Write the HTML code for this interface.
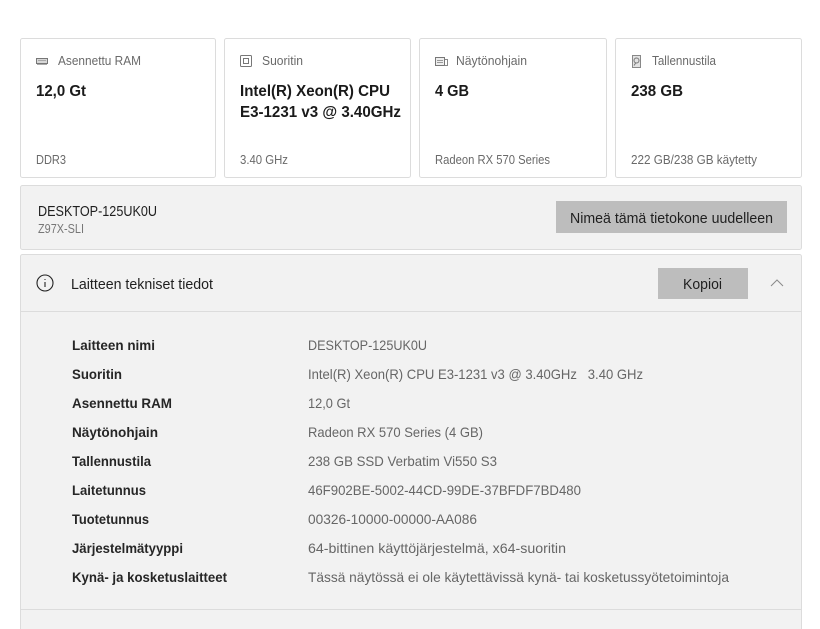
<!DOCTYPE html>
<html lang="fi">
<head>
<meta charset="utf-8">
<title>Tietoja</title>
<style>
html,body{margin:0;padding:0;background:#fff;width:820px;height:629px;overflow:hidden}
svg{display:block}
text{font-family:"Liberation Sans",sans-serif;font-size:14px;fill:#5f5f5f}
.cap{font-size:12.5px;fill:#6a6a6a}
.big{font-size:16px;font-weight:bold;fill:#1a1a1a}
.sub{font-size:12.5px;fill:#6a6a6a}
.dark{font-size:14.5px;fill:#1f1f1f}
.lb{font-size:14px;font-weight:bold;fill:#262626}
.val{font-size:14px;fill:#666}
</style>
</head>
<body>
<svg width="820" height="629" viewBox="0 0 820 629" xmlns="http://www.w3.org/2000/svg">
<rect width="820" height="629" fill="#fff"/>

<!-- cards -->
<g fill="#fff" stroke="#dcdcdc">
<rect x="20.5" y="38.5" width="195" height="139" rx="2"/>
<rect x="224.5" y="38.5" width="186" height="139" rx="2"/>
<rect x="419.5" y="38.5" width="187" height="139" rx="2"/>
<rect x="615.5" y="38.5" width="186" height="139" rx="2"/>
</g>

<!-- card icons -->
<g fill="none" stroke="#777" stroke-width="1">
<rect x="36.5" y="58.5" width="11" height="5" fill="#d8d8d8"/>
<path d="M38.5 60.5h7" stroke="#777" stroke-dasharray="1 1"/>
<path d="M37 64.5h10" stroke="#aaa"/>
<rect x="240.5" y="55.5" width="11" height="11" rx="1"/>
<rect x="243.5" y="58.5" width="5" height="5"/>
<rect x="435.5" y="57.5" width="9" height="8" fill="#eee"/>
<path d="M437 60.5h6M437 62.5h6" stroke="#999"/>
<path d="M444.5 59.5h3v6h-3" stroke="#888"/>
<rect x="632.5" y="55.5" width="8" height="12" fill="#e2e2e2" stroke="#888"/>
<circle cx="636.5" cy="60.5" r="2.5"/>
<path d="M634 65.5l2-3" stroke="#777"/>
</g>

<!-- card text -->
<text class="cap" x="58" y="65" textLength="83" lengthAdjust="spacingAndGlyphs">Asennettu RAM</text>
<text class="big" x="36" y="96" textLength="50" lengthAdjust="spacingAndGlyphs">12,0 Gt</text>
<text class="sub" x="36" y="164" textLength="30" lengthAdjust="spacingAndGlyphs">DDR3</text>

<text class="cap" x="262" y="65" textLength="41" lengthAdjust="spacingAndGlyphs">Suoritin</text>
<text class="big" x="240" y="96" textLength="150" lengthAdjust="spacingAndGlyphs">Intel(R) Xeon(R) CPU</text>
<text class="big" x="240" y="117" textLength="161" lengthAdjust="spacingAndGlyphs">E3-1231 v3 @ 3.40GHz</text>
<text class="sub" x="240" y="164" textLength="48" lengthAdjust="spacingAndGlyphs">3.40 GHz</text>

<text class="cap" x="456" y="65" textLength="71" lengthAdjust="spacingAndGlyphs">Näytönohjain</text>
<text class="big" x="435" y="96" textLength="34" lengthAdjust="spacingAndGlyphs">4 GB</text>
<text class="sub" x="435" y="164" textLength="115" lengthAdjust="spacingAndGlyphs">Radeon RX 570 Series</text>

<text class="cap" x="652" y="65" textLength="64" lengthAdjust="spacingAndGlyphs">Tallennustila</text>
<text class="big" x="631" y="96" textLength="52" lengthAdjust="spacingAndGlyphs">238 GB</text>
<text class="sub" x="631" y="164" textLength="126" lengthAdjust="spacingAndGlyphs">222 GB/238 GB käytetty</text>

<!-- device name panel -->
<rect x="20.5" y="185.5" width="781" height="64" rx="2" fill="#f2f2f2" stroke="#dcdcdc"/>
<text class="dark" x="38" y="216" textLength="119" lengthAdjust="spacingAndGlyphs">DESKTOP-125UK0U</text>
<text class="sub" x="38" y="233" textLength="46" lengthAdjust="spacingAndGlyphs" style="fill:#777">Z97X-SLI</text>
<rect x="556" y="201" width="231" height="32" fill="#bdbdbd"/>
<text class="dark" x="570" y="223" textLength="203" lengthAdjust="spacingAndGlyphs">Nimeä tämä tietokone uudelleen</text>

<!-- specs panel -->
<rect x="20.5" y="254.5" width="781" height="380" rx="2" fill="#f2f2f2" stroke="#dcdcdc"/>
<path d="M21 311.5h780M21 609.5h780" stroke="#dcdcdc" fill="none"/>

<circle cx="45" cy="283" r="8" fill="none" stroke="#222" stroke-width="1.1"/>
<path d="M45 282v5" stroke="#222" stroke-width="1.1" fill="none"/>
<rect x="44.5" y="279" width="1" height="1" fill="#222"/>

<text class="dark" x="71" y="289" textLength="142" lengthAdjust="spacingAndGlyphs">Laitteen tekniset tiedot</text>
<rect x="658" y="268" width="90" height="31" fill="#bdbdbd"/>
<text class="dark" x="683" y="289" textLength="39" lengthAdjust="spacingAndGlyphs">Kopioi</text>
<path d="M771 286l6-6 6 6" fill="none" stroke="#8a8a8a" stroke-width="1"/>

<!-- rows -->
<text class="lb" x="72" y="350" textLength="83" lengthAdjust="spacingAndGlyphs">Laitteen nimi</text>
<text class="val" x="308" y="350" textLength="119" lengthAdjust="spacingAndGlyphs">DESKTOP-125UK0U</text>
<text class="lb" x="72" y="379" textLength="50" lengthAdjust="spacingAndGlyphs">Suoritin</text>
<text class="val" x="308" y="379" textLength="335" lengthAdjust="spacingAndGlyphs" xml:space="preserve">Intel(R) Xeon(R) CPU E3-1231 v3 @ 3.40GHz   3.40 GHz</text>
<text class="lb" x="72" y="408" textLength="100" lengthAdjust="spacingAndGlyphs">Asennettu RAM</text>
<text class="val" x="308" y="408" textLength="42" lengthAdjust="spacingAndGlyphs">12,0 Gt</text>
<text class="lb" x="72" y="437" textLength="86" lengthAdjust="spacingAndGlyphs">Näytönohjain</text>
<text class="val" x="308" y="437" textLength="175" lengthAdjust="spacingAndGlyphs">Radeon RX 570 Series (4 GB)</text>
<text class="lb" x="72" y="466" textLength="79" lengthAdjust="spacingAndGlyphs">Tallennustila</text>
<text class="val" x="308" y="466" textLength="189" lengthAdjust="spacingAndGlyphs">238 GB SSD Verbatim Vi550 S3</text>
<text class="lb" x="72" y="495" textLength="74" lengthAdjust="spacingAndGlyphs">Laitetunnus</text>
<text class="val" x="308" y="495" textLength="273" lengthAdjust="spacingAndGlyphs">46F902BE-5002-44CD-99DE-37BFDF7BD480</text>
<text class="lb" x="72" y="524" textLength="77" lengthAdjust="spacingAndGlyphs">Tuotetunnus</text>
<text class="val" x="308" y="524" textLength="169" lengthAdjust="spacingAndGlyphs">00326-10000-00000-AA086</text>
<text class="lb" x="72" y="553" textLength="111" lengthAdjust="spacingAndGlyphs">Järjestelmätyyppi</text>
<text class="val" x="308" y="553" textLength="258" lengthAdjust="spacingAndGlyphs">64-bittinen käyttöjärjestelmä, x64-suoritin</text>
<text class="lb" x="72" y="582" textLength="155" lengthAdjust="spacingAndGlyphs">Kynä- ja kosketuslaitteet</text>
<text class="val" x="308" y="582" textLength="421" lengthAdjust="spacingAndGlyphs">Tässä näytössä ei ole käytettävissä kynä- tai kosketussyötetoimintoja</text>
</svg>
</body>
</html>
